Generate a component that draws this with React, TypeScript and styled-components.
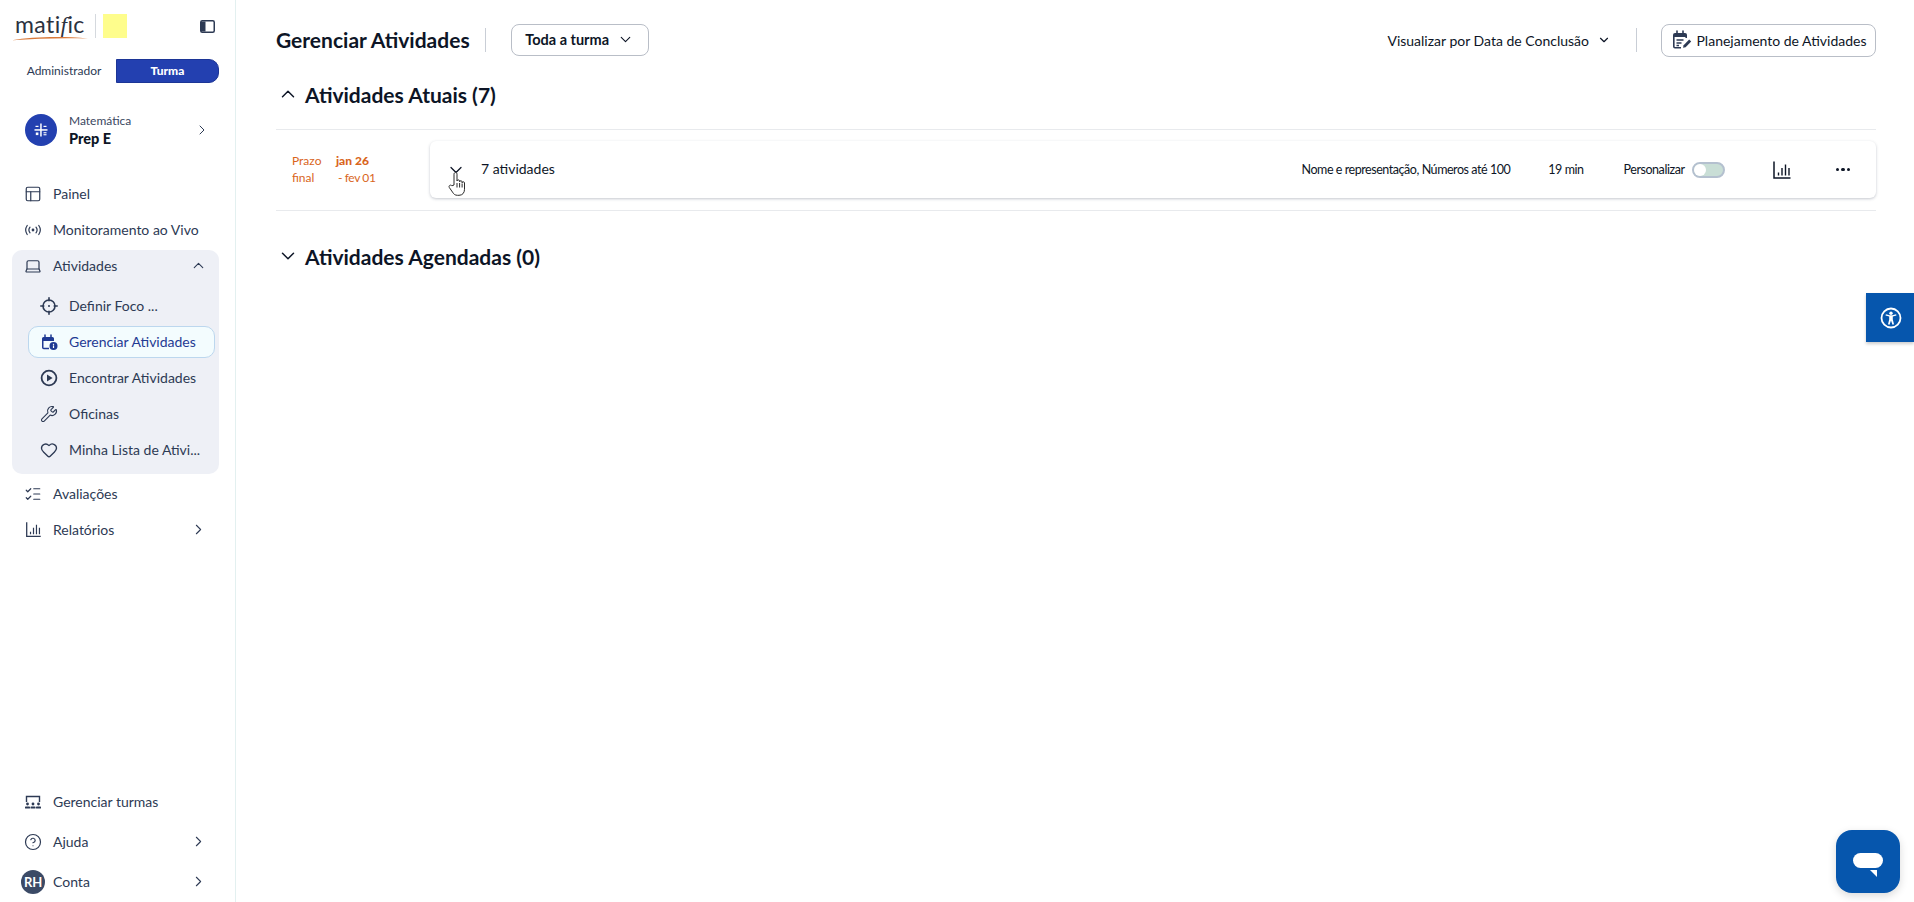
import React from "react";
import styled, { createGlobalStyle } from "styled-components";
import {
  ChevronDown,
  ChevronRight,
  ChevronUp,
  CircleHelp,
  Heart,
  Laptop,
  ListChecks,
  PanelsTopLeft,
  Wrench,
} from "lucide-react";

const GlobalStyle = createGlobalStyle`
  html, body {
    margin: 0;
    padding: 0;
    background: #fff;
    font-family: "Lato", "Liberation Sans", sans-serif;
    color: #2d3a54;
  }
  * { box-sizing: border-box; }
`;

const ChartIcon: React.FC<{ size?: number }> = ({ size = 18 }) => (
  <svg width={size} height={size} viewBox="0 0 20 20" fill="none" stroke="currentColor" strokeWidth="1.5">
    <path d="M2 1.5v16.5h16.5" />
    <path d="M6.5 15.5v-3M10 15.5V8M13.5 15.5V4.5M17 15.5V8" strokeWidth="1.4" />
  </svg>
);

const PanelIcon = () => (
  <svg width="15" height="13" viewBox="0 0 15 13" fill="none">
    <rect x="0.75" y="0.75" width="13.5" height="11.5" rx="1.5" stroke="#2d3a54" strokeWidth="1.5" />
    <path d="M1 1.5h4.5v10H1z" fill="#2d3a54" />
  </svg>
);

const LiveIcon = () => (
  <svg width="18" height="18" viewBox="0 0 18 18" fill="none" stroke="currentColor" strokeWidth="1.2" strokeLinecap="round">
    <circle cx="9" cy="9" r="0.8" fill="currentColor" />
    <path d="M6 6.2a4.5 4.5 0 0 0 0 5.6M12 6.2a4.5 4.5 0 0 1 0 5.6" />
    <path d="M3.2 4.5a8 8 0 0 0 0 9M14.8 4.5a8 8 0 0 1 0 9" />
  </svg>
);

const TargetIcon = () => (
  <svg width="18" height="18" viewBox="0 0 18 18" fill="none" stroke="currentColor" strokeWidth="1.6">
    <circle cx="9" cy="9" r="6" />
    <path d="M9 .8v3M9 14.2v3M.8 9h3M14.2 9h3" strokeLinecap="round" />
    <circle cx="9" cy="9" r="1" fill="currentColor" stroke="none" />
  </svg>
);

const PlayIcon = () => (
  <svg width="18" height="18" viewBox="0 0 18 18" fill="none">
    <circle cx="9" cy="9" r="7.4" stroke="currentColor" strokeWidth="1.8" />
    <path d="M7 5.6L12.6 9 7 12.4z" fill="currentColor" />
  </svg>
);

const CalendarLockIcon = () => (
  <svg width="18" height="18" viewBox="0 0 18 18" fill="none">
    <path d="M2 5.5a1.5 1.5 0 0 1 1.5-1.5h9A1.5 1.5 0 0 1 14 5.5V8H2z" fill="#1f3a93" />
    <path d="M2.75 7v7.5c0 .6.5 1 1 1H9" stroke="#1f3a93" strokeWidth="1.5" />
    <path d="M5 2v3M11 2v3" stroke="#1f3a93" strokeWidth="1.5" strokeLinecap="round" />
    <circle cx="13.5" cy="13" r="4" fill="#1f3a93" />
    <rect x="12.9" y="12.4" width="1.2" height="2.6" fill="#fff" />
    <rect x="12.9" y="10.8" width="1.2" height="1.1" fill="#fff" />
  </svg>
);

const ClassIcon = () => (
  <svg width="18" height="18" viewBox="0 0 18 18" fill="none" stroke="currentColor" strokeWidth="1.4">
    <path d="M2.5 9V3.5h13V9" />
    <g fill="currentColor" stroke="none">
      <circle cx="3.5" cy="11" r="1.4" />
      <circle cx="9" cy="11" r="1.4" />
      <circle cx="14.5" cy="11" r="1.4" />
      <rect x="1" y="13.6" width="5" height="2" rx="0.6" />
      <rect x="6.5" y="13.6" width="5" height="2" rx="0.6" />
      <rect x="12" y="13.6" width="5" height="2" rx="0.6" />
    </g>
  </svg>
);

const PlanIcon = () => (
  <svg width="22" height="22" viewBox="0 0 22 22" fill="none">
    <path d="M2 6a2 2 0 0 1 2-2h10a2 2 0 0 1 2 2v2H2z" fill="#2d3a54" />
    <path d="M2.8 7v10.5c0 .7.5 1.2 1.2 1.2h6M15.2 7v2" stroke="#2d3a54" strokeWidth="1.6" />
    <path d="M6 2v3M12 2v3" stroke="#2d3a54" strokeWidth="1.6" strokeLinecap="round" />
    <path d="M5.5 11h7M5.5 14h5M5.5 16.5h2.5" stroke="#2d3a54" strokeWidth="1.3" />
    <path d="M12 18.8l.6-2.6 5.6-5.6 2 2-5.6 5.6z" fill="#2d3a54" />
  </svg>
);

const MathIcon = () => (
  <svg width="14" height="14" viewBox="0 0 14 14" fill="#fff">
    <rect x="6.2" y="0.5" width="1.5" height="13" />
    <rect x="0.5" y="6.2" width="13" height="1.5" />
    <rect x="1.5" y="2.8" width="3" height="1.2" />
    <rect x="9.5" y="2.8" width="3" height="1.2" />
    <rect x="1.8" y="9.5" width="2.6" height="2.6" />
    <rect x="9.5" y="9.2" width="3" height="1.1" />
    <rect x="9.5" y="11.2" width="3" height="1.1" />
  </svg>
);

const HandCursor = () => (
  <svg width="19" height="26" viewBox="0 0 19 26" fill="#fff" stroke="#2b2b2b" strokeWidth="1" strokeLinejoin="round">
    <path d="M6 14V3.2c0-2.2 3-2.2 3 0V10c0-1.5 2.6-1.5 2.6 0v.8c0-1.400 2.5-1.400 2.5 0v1c0-1.300 2.400-1.300 2.400 0v6.500c0 3.500-2 6-5.500 6H9.500c-2.500 0-3.800-1.200-5-3.200L1.300 16.500c-1-1.800 1.200-3.300 2.600-1.700z" />
    <path d="M9 12v4.500M11.600 12v4.500M14.100 12.500v4" />
  </svg>
);

const AccessibilityIcon = () => (
  <svg width="22" height="22" viewBox="0 0 22 22" fill="none">
    <circle cx="11" cy="11" r="9.5" stroke="#fff" strokeWidth="1.8" />
    <circle cx="11" cy="6.3" r="1.7" fill="#fff" />
    <path d="M5.5 8.6l3.7 1v3l-1.2 4.7 1.5.4L11 13.500l1.500 4.200 1.500-.4-1.200-4.700v-3l3.700-1-.4-1.300-3.800 1H9.700l-3.800-1z" fill="#fff" />
  </svg>
);

const ChatGlyph = () => (
  <svg width="32" height="26" viewBox="0 0 32 26" fill="#fff">
    <rect x="1" y="1" width="30" height="15" rx="7.5" />
    <path d="M18 18h7v7z" />
  </svg>
);

const navTop = [
  { label: "Painel", icon: <PanelsTopLeft size={18} strokeWidth={1.6} /> },
  { label: "Monitoramento ao Vivo", icon: <LiveIcon /> },
];

const subNav = [
  { label: "Definir Foco ...", icon: <TargetIcon /> },
  { label: "Gerenciar Atividades", icon: <CalendarLockIcon />, active: true },
  { label: "Encontrar Atividades", icon: <PlayIcon /> },
  { label: "Oficinas", icon: <Wrench size={18} strokeWidth={1.5} /> },
  { label: "Minha Lista de Ativi...", icon: <Heart size={18} strokeWidth={1.8} /> },
];

const App: React.FC = () => (
  <Page>
    <GlobalStyle />
    <Sidebar>
      <BrandBar>
        <Logo>
          <LogoWord>
            mati<em>f</em>ic
          </LogoWord>
          <LogoSwoosh viewBox="0 0 76 6" preserveAspectRatio="none">
            <path d="M0 5C20 1 50 0 76 3C50 2 25 3 0 5z" fill="#d9793a" />
          </LogoSwoosh>
        </Logo>
        <BrandDivider />
        <SchoolMark />
        <CollapseButton>
          <PanelIcon />
        </CollapseButton>
      </BrandBar>

      <RoleTabs>
        <RoleLabel>Administrador</RoleLabel>
        <RolePill>Turma</RolePill>
      </RoleTabs>

      <CourseRow>
        <CourseBadge>
          <MathIcon />
        </CourseBadge>
        <CourseText>
          <CourseSubject>Matemática</CourseSubject>
          <CourseName>Prep E</CourseName>
        </CourseText>
        <ChevronRight size={16} strokeWidth={1.5} />
      </CourseRow>

      <NavList>
        {navTop.map((item) => (
          <NavRow key={item.label}>
            <NavIcon>{item.icon}</NavIcon>
            {item.label}
          </NavRow>
        ))}
      </NavList>

      <NavGroup>
        <GroupHead>
          <NavIcon>
            <Laptop size={18} strokeWidth={1.6} />
          </NavIcon>
          Atividades
          <RowChevron>
            <ChevronUp size={17} strokeWidth={1.6} />
          </RowChevron>
        </GroupHead>
        <SubList>
          {subNav.map((item) => (
            <SubRow key={item.label} $active={item.active}>
              <NavIcon>{item.icon}</NavIcon>
              {item.label}
            </SubRow>
          ))}
        </SubList>
      </NavGroup>

      <AfterGroup>
        <NavRow>
          <NavIcon>
            <ListChecks size={18} strokeWidth={1.6} />
          </NavIcon>
          Avaliações
        </NavRow>
        <NavRow>
          <NavIcon>
            <ChartIcon size={17} />
          </NavIcon>
          Relatórios
          <RowChevron>
            <ChevronRight size={17} strokeWidth={1.5} />
          </RowChevron>
        </NavRow>
      </AfterGroup>

      <SidebarFooter>
        <FooterRow>
          <NavIcon>
            <ClassIcon />
          </NavIcon>
          Gerenciar turmas
        </FooterRow>
        <FooterRow>
          <NavIcon>
            <CircleHelp size={18} strokeWidth={1.6} />
          </NavIcon>
          Ajuda
          <RowChevron>
            <ChevronRight size={17} strokeWidth={1.5} />
          </RowChevron>
        </FooterRow>
        <FooterRow>
          <NavIcon>
            <Avatar>RH</Avatar>
          </NavIcon>
          Conta
          <RowChevron>
            <ChevronRight size={17} strokeWidth={1.5} />
          </RowChevron>
        </FooterRow>
      </SidebarFooter>
    </Sidebar>

    <Main>
      <Header>
        <Title>Gerenciar Atividades</Title>
        <HeaderDivider />
        <FilterButton>
          Toda a turma
          <ChevronDown size={17} strokeWidth={1.6} />
        </FilterButton>
        <HeaderRight>
          <ViewSelect>
            Visualizar por Data de Conclusão
            <ChevronDown size={14} strokeWidth={2} />
          </ViewSelect>
          <HeaderDivider />
          <PlanButton>
            <PlanIcon />
            Planejamento de Atividades
          </PlanButton>
        </HeaderRight>
      </Header>

      <SectionHead>
        <ChevronUp size={22} strokeWidth={1.6} />
        Atividades Atuais (7)
      </SectionHead>

      <RowBand>
        <DueDate>
          <DueLabel>Prazo final</DueLabel>
          <DueRange>
            <strong>jan 26</strong>
            <span>- fev 01</span>
          </DueRange>
        </DueDate>
        <Card>
          <CardToggle>
            <ChevronDown size={20} strokeWidth={1.5} />
            <CursorLayer>
              <HandCursor />
            </CursorLayer>
          </CardToggle>
          <CardCount>7 atividades</CardCount>
          <CardMeta>
            <Topics>Nome e representação, Números até 100</Topics>
            <Duration>19 min</Duration>
            <Personalize>
              Personalizar
              <Toggle>
                <ToggleKnob />
              </Toggle>
            </Personalize>
            <CardChart>
              <ChartIcon size={20} />
            </CardChart>
            <Dots>
              <i />
              <i />
              <i />
            </Dots>
          </CardMeta>
        </Card>
      </RowBand>

      <SectionHeadLower>
        <ChevronDown size={22} strokeWidth={1.6} />
        Atividades Agendadas (0)
      </SectionHeadLower>
    </Main>

    <AccessTab>
      <AccessibilityIcon />
    </AccessTab>
    <ChatButton>
      <ChatGlyph />
    </ChatButton>
  </Page>
);

export default App;

const Page = styled.div`
  display: flex;
  width: 100%;
  height: 100vh;
  overflow: hidden;
  background: #fff;
`;

const Sidebar = styled.aside`
  width: 236px;
  flex: none;
  height: 100%;
  display: flex;
  flex-direction: column;
  border-right: 1px solid #e3f0f0;
  font-size: 14px;
  color: #2d3a54;
`;

const BrandBar = styled.div`
  height: 28px;
  margin-top: 12px;
  padding: 0 20px 0 15px;
  display: flex;
  align-items: center;
`;

const Logo = styled.div`
  position: relative;
  width: 68px;
  height: 28px;
  margin-right: 12px;
`;

const LogoWord = styled.span`
  font-family: "Lato", sans-serif;
  font-size: 23px;
  line-height: 24px;
  letter-spacing: 0.4px;
  color: #2b3240;
  em {
    font-family: "Liberation Serif", serif;
  }
`;

const LogoSwoosh = styled.svg`
  position: absolute;
  left: -3px;
  bottom: -1px;
  width: 76px;
  height: 5px;
`;

const BrandDivider = styled.div`
  width: 1px;
  height: 24px;
  background: #d5d9de;
  margin-right: 7px;
`;

const SchoolMark = styled.div`
  width: 24px;
  height: 24px;
  background: #fefd8c;
`;

const CollapseButton = styled.div`
  margin-left: auto;
  display: flex;
`;

const RoleTabs = styled.div`
  margin: 19px 16px 0 12px;
  height: 24px;
  display: flex;
  align-items: center;
`;

const RoleLabel = styled.span`
  width: 104px;
  padding-bottom: 1px;
  text-align: center;
  font-size: 12px;
  color: #2d3a54;
`;

const RolePill = styled.span`
  flex: 1;
  height: 24px;
  padding-bottom: 1px;
  display: flex;
  align-items: center;
  justify-content: center;
  background: #2340b0;
  border: 1px solid #1c3596;
  border-radius: 0 10px 10px 0;
  color: #fff;
  font-size: 12px;
  font-weight: 900;
`;

const CourseRow = styled.div`
  margin-top: 31px;
  height: 32px;
  padding: 0 25px 0 25px;
  display: flex;
  align-items: center;
`;

const CourseBadge = styled.div`
  width: 32px;
  height: 32px;
  border-radius: 50%;
  background: #2340b0;
  display: flex;
  align-items: center;
  justify-content: center;
  margin-right: 12px;
`;

const CourseText = styled.div`
  flex: 1;
  padding-bottom: 1px;
  display: flex;
  flex-direction: column;
  gap: 2px;
`;

const CourseSubject = styled.span`
  font-size: 12px;
  line-height: 15px;
  color: #3a4660;
`;

const CourseName = styled.span`
  font-size: 14.5px;
  line-height: 17px;
  font-weight: 900;
  color: #0d1526;
`;

const NavList = styled.div`
  margin-top: 30px;
`;

const NavRow = styled.div`
  height: 36px;
  padding: 0 28px 1px 24px;
  display: flex;
  align-items: center;
`;

const NavIcon = styled.span`
  width: 18px;
  height: 18px;
  margin-right: 11px;
  display: flex;
  align-items: center;
  justify-content: center;
  flex: none;
`;

const RowChevron = styled.span`
  margin-left: auto;
  display: flex;
`;

const NavGroup = styled.div`
  margin: 2px 16px 0 12px;
  padding-bottom: 8px;
  background: #eef0f6;
  border-radius: 10px;
`;

const GroupHead = styled.div`
  height: 32px;
  padding: 0 12px 1px 12px;
  display: flex;
  align-items: center;
`;

const SubList = styled.div`
  margin-top: 8px;
  display: flex;
  flex-direction: column;
  gap: 4px;
  padding: 0 4px 0 16px;
`;

const SubRow = styled.div<{ $active?: boolean }>`
  height: 32px;
  padding: 0 0 1px 11px;
  display: flex;
  align-items: center;
  white-space: nowrap;
  border-radius: 10px;
  border: 1px solid ${(p) => (p.$active ? "#bcd7ee" : "transparent")};
  background: ${(p) => (p.$active ? "#f3fcfe" : "transparent")};
  color: ${(p) => (p.$active ? "#1f3a93" : "#2d3a54")};
`;

const AfterGroup = styled.div`
  margin-top: 2px;
`;

const SidebarFooter = styled.div`
  margin-top: auto;
`;

const FooterRow = styled(NavRow)`
  height: 40px;
`;

const Avatar = styled.span`
  width: 24px;
  height: 24px;
  flex: none;
  border-radius: 50%;
  background: #3b4a66;
  color: #fff;
  font-size: 13px;
  font-weight: 700;
  letter-spacing: -0.3px;
  display: flex;
  align-items: center;
  justify-content: center;
`;

const Main = styled.main`
  flex: 1;
  min-width: 0;
  padding: 24px 38px 0 40px;
  color: #0d1526;
`;

const Header = styled.header`
  height: 32px;
  display: flex;
  align-items: center;
`;

const Title = styled.h1`
  margin: 0 15px 1px 0;
  font-size: 21px;
  font-weight: 700;
`;

const HeaderDivider = styled.div`
  width: 1px;
  height: 24px;
  background: #c9ced6;
`;

const FilterButton = styled.div`
  margin-left: 25px;
  width: 138px;
  height: 32px;
  padding-bottom: 1px;
  border: 1px solid #b9bec7;
  border-radius: 8px;
  display: flex;
  align-items: center;
  justify-content: center;
  gap: 8px;
  font-size: 14.5px;
  font-weight: 700;
`;

const HeaderRight = styled.div`
  margin-left: auto;
  display: flex;
  align-items: center;
`;

const ViewSelect = styled.div`
  display: flex;
  align-items: center;
  gap: 8px;
  margin-right: 25px;
  font-size: 14px;
`;

const PlanButton = styled.div`
  margin-left: 24px;
  width: 215px;
  height: 33px;
  border: 1px solid #b9bec7;
  border-radius: 8px;
  display: flex;
  align-items: center;
  justify-content: center;
  gap: 4px;
  font-size: 14px;
`;

const SectionHead = styled.h2`
  margin: 23px 0 0;
  height: 32px;
  padding: 0 0 2px 1px;
  display: flex;
  align-items: center;
  gap: 6px;
  font-size: 21px;
  font-weight: 700;
`;

const SectionHeadLower = styled(SectionHead)`
  margin-top: 30px;
`;

const RowBand = styled.section`
  margin-top: 18px;
  padding: 11px 0 12px;
  border-top: 1px solid #e8eaed;
  border-bottom: 1px solid #e8eaed;
  display: flex;
`;

const DueDate = styled.div`
  width: 154px;
  flex: none;
  padding: 11px 0 0 16px;
  display: flex;
  font-size: 12px;
  line-height: 17px;
  color: #d9651c;
`;

const DueLabel = styled.span`
  width: 44px;
`;

const DueRange = styled.span`
  display: flex;
  flex-direction: column;
  strong {
    font-weight: 900;
  }
  span {
    padding-left: 2px;
    letter-spacing: -0.4px;
  }
`;

const Card = styled.div`
  flex: 1;
  height: 57px;
  border-radius: 6px;
  display: flex;
  align-items: center;
  padding: 0 16px 0 16px;
  box-shadow: 0 1px 3px rgba(45, 58, 84, 0.28);
`;

const CardToggle = styled.div`
  position: relative;
  display: flex;
  margin-right: 15px;
`;

const CursorLayer = styled.span`
  position: absolute;
  left: 2px;
  top: 11px;
  display: flex;
`;

const CardCount = styled.span`
  padding-bottom: 2px;
  font-size: 14px;
`;

const CardMeta = styled.div`
  margin-left: auto;
  display: flex;
  align-items: center;
  font-size: 12.5px;
  letter-spacing: -0.45px;
`;

const Topics = styled.span`
  margin-right: 38px;
`;

const Duration = styled.span`
  margin-right: 40px;
`;

const Personalize = styled.span`
  display: flex;
  align-items: center;
  gap: 7px;
  margin-right: 47px;
`;

const Toggle = styled.span`
  position: relative;
  width: 33px;
  height: 16px;
  border-radius: 8px;
  background: #c9ded6;
  border: 2px solid #b4c0cf;
`;

const ToggleKnob = styled.span`
  position: absolute;
  left: 0;
  top: 0;
  width: 12px;
  height: 12px;
  border-radius: 50%;
  background: #fff;
`;

const CardChart = styled.span`
  display: flex;
  margin-right: 44px;
`;

const Dots = styled.span`
  display: flex;
  gap: 2px;
  margin-right: 10px;
  i {
    width: 3.5px;
    height: 3.5px;
    border-radius: 50%;
    background: #0d1526;
  }
`;

const AccessTab = styled.div`
  position: fixed;
  right: 0;
  top: 293px;
  width: 48px;
  height: 49px;
  padding-left: 2px;
  background: #0656ad;
  box-shadow: 0 2px 3px rgba(0, 0, 0, 0.2);
  display: flex;
  align-items: center;
  justify-content: center;
`;

const ChatButton = styled.div`
  position: fixed;
  right: 14px;
  bottom: 9px;
  width: 64px;
  height: 63px;
  padding-top: 6px;
  border-radius: 16px;
  background: #0656ad;
  box-shadow: 0 3px 8px rgba(0, 0, 0, 0.15);
  display: flex;
  align-items: center;
  justify-content: center;
`;
